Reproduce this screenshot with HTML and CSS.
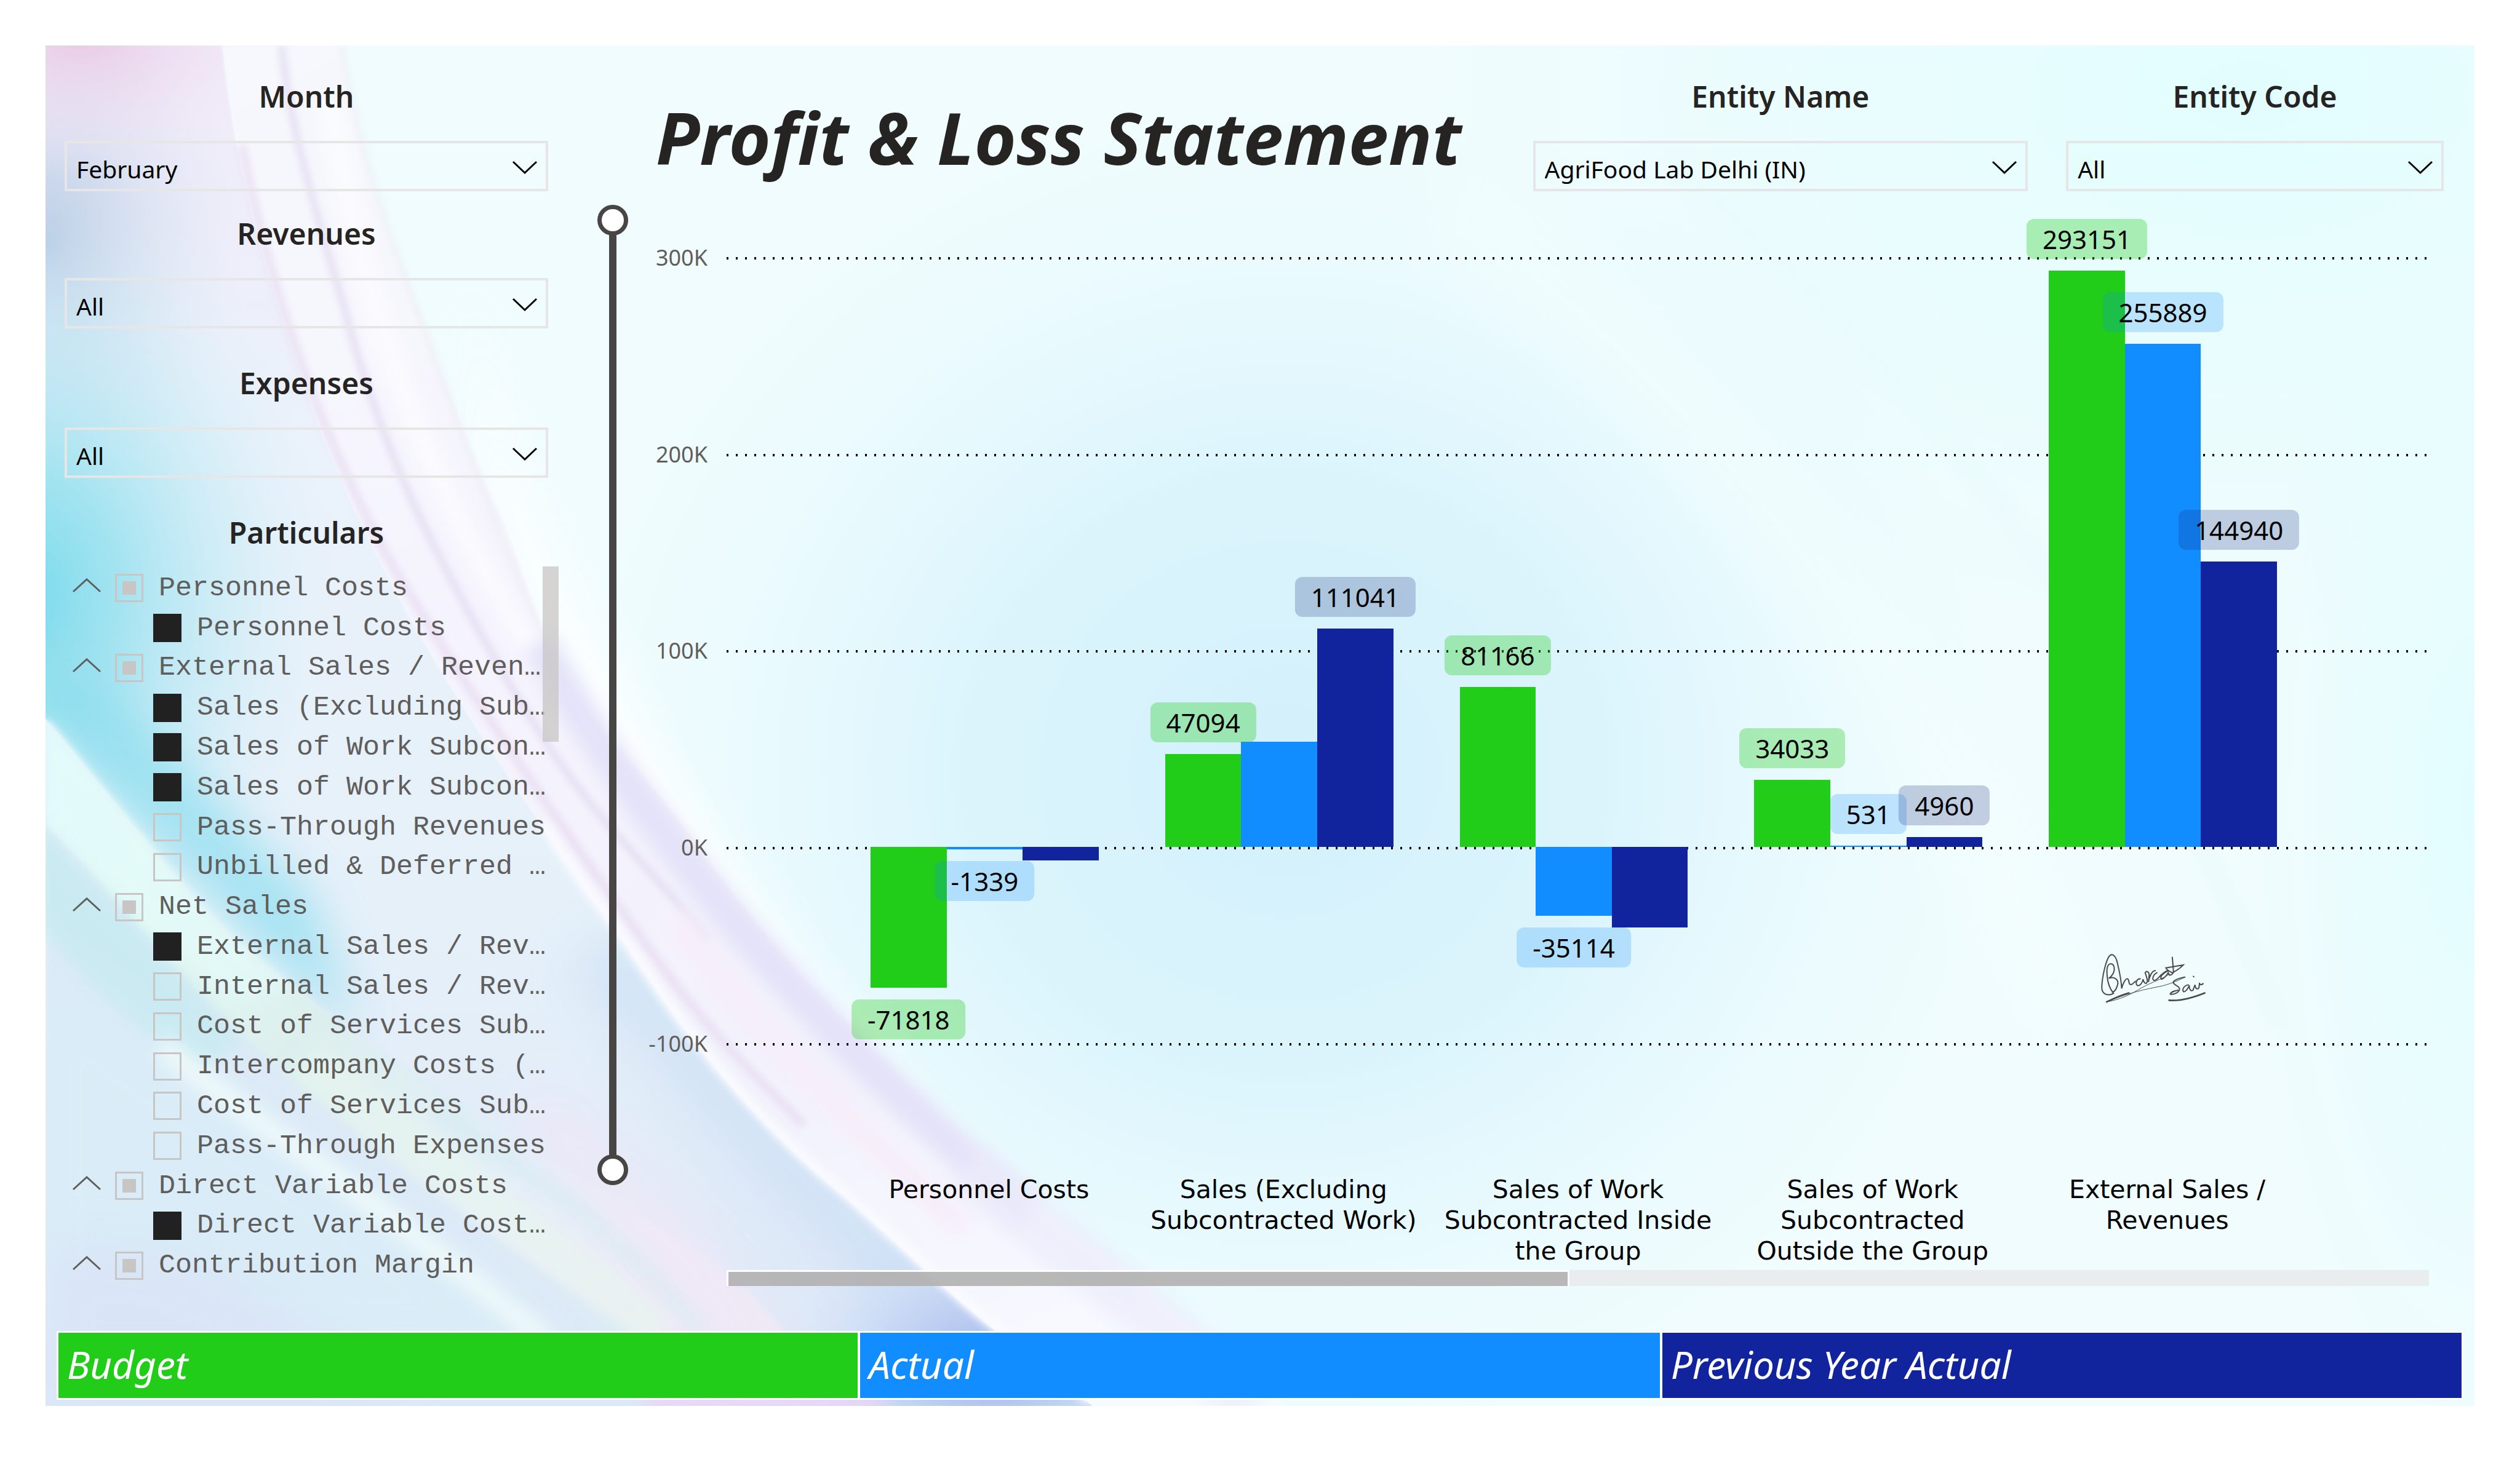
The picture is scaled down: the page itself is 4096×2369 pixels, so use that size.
FILE: index.html
```html
<!DOCTYPE html>
<html lang="en">
<head>
<meta charset="utf-8">
<title>Profit &amp; Loss Statement</title>
<link rel="stylesheet" href="styles.css">
</head>
<body>
<main class="report">
  <svg class="backdrop" viewBox="28 28 1512 847" preserveAspectRatio="none" aria-hidden="true">
    <defs>
      <filter id="b1" x="-20%" y="-20%" width="140%" height="140%"><feGaussianBlur stdDeviation="1"/></filter>
      <filter id="b2" x="-20%" y="-20%" width="140%" height="140%"><feGaussianBlur stdDeviation="2"/></filter>
      <filter id="b5" x="-20%" y="-20%" width="140%" height="140%"><feGaussianBlur stdDeviation="5"/></filter>
      <filter id="b14" x="-40%" y="-40%" width="180%" height="180%"><feGaussianBlur stdDeviation="14"/></filter>
      <radialGradient id="center"><stop offset="0" stop-color="#d2f0fb"/><stop offset=".45" stop-color="#d8f3fc" stop-opacity=".85"/><stop offset="1" stop-color="#e6fbfe" stop-opacity="0"/></radialGradient>
      <radialGradient id="corner"><stop offset="0" stop-color="#e2fdfe"/><stop offset="1" stop-color="#e6fefe" stop-opacity="0"/></radialGradient>
      <radialGradient id="cyan"><stop offset="0" stop-color="#78daec"/><stop offset=".3" stop-color="#93e0ee" stop-opacity=".8"/><stop offset=".65" stop-color="#c0eaf4" stop-opacity=".5"/><stop offset="1" stop-color="#e8f2fa" stop-opacity="0"/></radialGradient>
      <radialGradient id="slate"><stop offset="0" stop-color="#b4c8e2"/><stop offset="1" stop-color="#dfe8f6" stop-opacity="0"/></radialGradient>
      <radialGradient id="pink"><stop offset="0" stop-color="#e8c8e4"/><stop offset="1" stop-color="#f0e6f6" stop-opacity="0"/></radialGradient>
      <radialGradient id="blue"><stop offset="0" stop-color="#a3b4ea"/><stop offset=".5" stop-color="#bccff3" stop-opacity=".7"/><stop offset="1" stop-color="#d6e4f8" stop-opacity="0"/></radialGradient>
      <linearGradient id="inner" x1="0" y1="0" x2="0" y2="1"><stop offset="0" stop-color="#f1ebf8"/><stop offset=".3" stop-color="#eaf2fb"/><stop offset=".65" stop-color="#e5f0f9"/><stop offset="1" stop-color="#dce7f7"/></linearGradient>
      <linearGradient id="band" gradientUnits="userSpaceOnUse" x1="28" y1="450" x2="400" y2="800"><stop offset="0" stop-color="#e2fbfd"/><stop offset=".25" stop-color="#e4f9f2"/><stop offset=".5" stop-color="#dcefee"/><stop offset=".8" stop-color="#e6eff9"/><stop offset="1" stop-color="#f0eaf7"/></linearGradient>
      <linearGradient id="veil" gradientUnits="userSpaceOnUse" x1="190" y1="28" x2="640" y2="874"><stop offset="0" stop-color="#f6f8fd"/><stop offset=".4" stop-color="#f5f3fd"/><stop offset=".75" stop-color="#f2f2fc"/><stop offset="1" stop-color="#f8faff"/></linearGradient>
      <clipPath id="above"><path d="M28 28H1540V875H520C500 800 398 757 331 713C265 679 191 623 143 582C110 550 60 485 28 447Z"/></clipPath>
      <clipPath id="inside"><path d="M28 28H138C148 121 170 184 196 260C225 335 265 410 338 515C352 538 365 556 380 575C398 600 415 628 435 652C465 690 495 720 526 745C560 775 590 805 618 827L680 875H28Z"/></clipPath>
    </defs>
    <rect x="28" y="28" width="1512" height="847" fill="#f0fcfe"/>
    <ellipse cx="1400" cy="60" rx="520" ry="340" fill="url(#corner)"/>
    <ellipse cx="1540" cy="500" rx="140" ry="400" fill="url(#corner)"/>
    <ellipse cx="800" cy="480" rx="450" ry="420" fill="url(#center)"/>
    <path d="M900 130C1050 230 1200 420 1290 640" fill="none" stroke="#f5fefe" stroke-width="60" opacity=".4" filter="url(#b14)"/>
    <path d="M1040 100C1150 200 1300 330 1420 640" fill="none" stroke="#dcf6f5" stroke-width="5" opacity=".4" filter="url(#b5)"/>
    <path d="M290 160C310 330 430 530 640 770L560 740L380 500L300 300Z" fill="#fff" opacity=".9" filter="url(#b14)"/>
    <g clip-path="url(#inside)">
      <rect x="28" y="28" width="700" height="847" fill="url(#inner)"/>
      <g clip-path="url(#above)">
        <ellipse cx="28" cy="150" rx="125" ry="150" fill="url(#slate)"/>
        <ellipse cx="15" cy="370" rx="200" ry="260" fill="url(#cyan)"/>
        <path d="M10 420C90 520 140 575 220 640L195 560L60 420Z" fill="#84dcee" opacity=".65" filter="url(#b14)"/>
      </g>
      <ellipse cx="615" cy="850" rx="130" ry="100" fill="url(#blue)"/>
      <path d="M370 590C430 660 480 720 570 800" fill="none" stroke="#c6dcf4" stroke-width="40" opacity=".55" filter="url(#b14)"/>
    </g>
    <ellipse cx="50" cy="20" rx="130" ry="90" fill="url(#pink)"/>
    <path d="M138 28C148 121 170 184 196 260C225 335 265 410 338 515C352 538 365 556 380 575C398 600 415 628 435 652C465 690 495 720 526 745C560 775 590 805 618 827L680 875H800C770 850 720 805 700 790C665 765 635 740 618 723C585 695 550 660 526 635C500 610 490 598 480 586C460 562 440 535 426 515C400 482 375 455 352 427C335 390 325 355 313 325C292 282 265 208 233 121C225 90 216 60 212 28Z" fill="url(#veil)" filter="url(#b1)"/>
    <path d="M212 28C222 90 245 155 265 208C292 282 315 350 352 427" fill="none" stroke="#ecebf2" stroke-width="3" opacity=".6" filter="url(#b2)"/>
    <path d="M175 28C180 80 196 130 215 195C225 235 245 290 265 330C290 380 315 425 345 470C375 515 410 545 440 585" fill="none" stroke="#e3dcf1" stroke-width="5" opacity=".75" filter="url(#b2)"/>
    <path d="M205 60C225 200 270 310 340 420" fill="none" stroke="#fdfdff" stroke-width="12" opacity=".8" filter="url(#b5)"/>
    <path d="M150 90C170 190 200 270 240 345C290 430 360 530 412 602C440 640 465 665 500 700" fill="none" stroke="#e8dcf1" stroke-width="6" opacity=".7" filter="url(#b2)"/>
    <path d="M420 570C460 630 510 680 600 765" fill="none" stroke="#f7eef9" stroke-width="18" opacity=".9" filter="url(#b5)"/>
    <path d="M335 400C365 455 405 510 450 565C500 625 560 685 640 755" fill="none" stroke="#e1e0f8" stroke-width="22" opacity=".85" filter="url(#b5)"/>
    <path d="M600 725C660 775 720 820 780 875" fill="none" stroke="#ebecfb" stroke-width="34" opacity=".7" filter="url(#b5)"/>
    <path d="M338 513C352 536 365 554 380 573C398 598 415 626 435 650C465 688 495 718 526 743C560 773 590 803 618 825L678 872" fill="none" stroke="#fbfbff" stroke-width="7" opacity=".8" filter="url(#b2)"/>
    <path d="M28 447C60 485 110 550 143 582C191 623 265 679 331 713C398 757 450 790 490 850L480 875H28Z" fill="#dceaf7" filter="url(#b2)"/>
    <path d="M28 447C60 485 110 550 143 582C191 623 265 679 331 713C398 757 470 790 500 850L400 830C300 770 170 670 111 604C90 580 60 545 28 513Z" fill="url(#band)" filter="url(#b2)"/>
    <path d="M28 447C60 485 110 550 143 582C150 588 165 602 180 614L150 625C110 590 60 545 28 505Z" fill="#e2fafa" opacity=".75" filter="url(#b5)"/>
    <path d="M20 510C60 550 110 600 150 650L120 665C80 640 50 610 20 570Z" fill="#bcebee" opacity=".55" filter="url(#b5)"/>
    <path d="M20 600C70 630 130 680 190 720C240 755 300 800 340 840H20Z" fill="#d9eef8" opacity=".7" filter="url(#b14)"/>
    <path d="M100 650C150 695 240 750 340 835" fill="none" stroke="#f0fbfa" stroke-width="14" opacity=".85" filter="url(#b5)"/>
    <path d="M190 660C240 700 310 750 410 830" fill="none" stroke="#e6f5ee" stroke-width="26" opacity=".7" filter="url(#b5)"/>
    <path d="M270 690C330 730 380 760 440 830" fill="none" stroke="#d2ebf1" stroke-width="14" opacity=".6" filter="url(#b5)"/>
    <path d="M330 690C390 740 440 780 480 860" fill="none" stroke="#efe8f6" stroke-width="30" opacity=".9" filter="url(#b14)"/>
    <path d="M28 780C80 760 180 800 250 875H28Z" fill="#dae2f6" opacity=".7" filter="url(#b14)"/>
    <rect x="400" y="868" width="150" height="10" fill="#ecd2f6" filter="url(#b5)"/>
  </svg>

  <div class="body">
    <aside class="filters">
      <div class="field">
        <label for="month">Month</label>
        <div class="pick"><select id="month"><option>February</option></select><svg viewBox="0 0 40 20" aria-hidden="true"><path d="M1 1L20 19L39 1"/></svg></div>
      </div>
      <div class="field">
        <label for="revenues">Revenues</label>
        <div class="pick"><select id="revenues"><option>All</option></select><svg viewBox="0 0 40 20" aria-hidden="true"><path d="M1 1L20 19L39 1"/></svg></div>
      </div>
      <div class="field">
        <label for="expenses">Expenses</label>
        <div class="pick"><select id="expenses"><option>All</option></select><svg viewBox="0 0 40 20" aria-hidden="true"><path d="M1 1L20 19L39 1"/></svg></div>
      </div>
      <h2 class="tree-title">Particulars</h2>
      <div class="tree">
        <div class="row"><button class="fold" aria-label="Collapse"><svg viewBox="0 0 46 24"><path d="M1 22L23 2L45 22"/></svg></button><label><input type="checkbox" class="some">Personnel Costs</label></div>
        <div class="row child"><label><input type="checkbox" checked>Personnel Costs</label></div>
        <div class="row"><button class="fold" aria-label="Collapse"><svg viewBox="0 0 46 24"><path d="M1 22L23 2L45 22"/></svg></button><label><input type="checkbox" class="some">External Sales / Reven…</label></div>
        <div class="row child"><label><input type="checkbox" checked>Sales (Excluding Sub…</label></div>
        <div class="row child"><label><input type="checkbox" checked>Sales of Work Subcon…</label></div>
        <div class="row child"><label><input type="checkbox" checked>Sales of Work Subcon…</label></div>
        <div class="row child"><label><input type="checkbox">Pass-Through Revenues</label></div>
        <div class="row child"><label><input type="checkbox">Unbilled &amp; Deferred …</label></div>
        <div class="row"><button class="fold" aria-label="Collapse"><svg viewBox="0 0 46 24"><path d="M1 22L23 2L45 22"/></svg></button><label><input type="checkbox" class="some">Net Sales</label></div>
        <div class="row child"><label><input type="checkbox" checked>External Sales / Rev…</label></div>
        <div class="row child"><label><input type="checkbox">Internal Sales / Rev…</label></div>
        <div class="row child"><label><input type="checkbox">Cost of Services Sub…</label></div>
        <div class="row child"><label><input type="checkbox">Intercompany Costs (…</label></div>
        <div class="row child"><label><input type="checkbox">Cost of Services Sub…</label></div>
        <div class="row child"><label><input type="checkbox">Pass-Through Expenses</label></div>
        <div class="row"><button class="fold" aria-label="Collapse"><svg viewBox="0 0 46 24"><path d="M1 22L23 2L45 22"/></svg></button><label><input type="checkbox" class="some">Direct Variable Costs</label></div>
        <div class="row child"><label><input type="checkbox" checked>Direct Variable Cost…</label></div>
        <div class="row"><button class="fold" aria-label="Collapse"><svg viewBox="0 0 46 24"><path d="M1 22L23 2L45 22"/></svg></button><label><input type="checkbox" class="some">Contribution Margin</label></div>
        <span class="tree-scroll"></span>
      </div>
    </aside>

    <div class="zoom">
      <input type="range" min="0" max="100" value="0" aria-label="Axis maximum">
      <input type="range" min="0" max="100" value="100" aria-label="Axis minimum">
    </div>

    <section class="content">
      <header class="head">
        <h1>Profit &amp; Loss Statement</h1>
        <div class="field">
          <label for="entity">Entity Name</label>
          <div class="pick"><select id="entity"><option>AgriFood Lab Delhi (IN)</option></select><svg viewBox="0 0 40 20" aria-hidden="true"><path d="M1 1L20 19L39 1"/></svg></div>
        </div>
        <div class="field">
          <label for="code">Entity Code</label>
          <div class="pick"><select id="code"><option>All</option></select><svg viewBox="0 0 40 20" aria-hidden="true"><path d="M1 1L20 19L39 1"/></svg></div>
        </div>
      </header>

      <div class="chart">
        <div class="axis"><span>300K</span><span>200K</span><span>100K</span><span>0K</span><span>-100K</span></div>
        <div class="plot">
          <div class="lines"><i></i><i></i><i></i><i></i><i></i></div>
          <div class="groups">
            <div class="group">
              <div class="slot"><div class="bar neg budget" style="--v:71818"><b>-71818</b></div></div>
              <div class="slot"><div class="bar neg actual" style="--v:1339"><b>-1339</b></div></div>
              <div class="slot"><div class="bar neg prior" style="--v:7100"></div></div>
            </div>
            <div class="group">
              <div class="slot"><div class="bar budget" style="--v:47094"><b>47094</b></div></div>
              <div class="slot"><div class="bar actual" style="--v:53400"></div></div>
              <div class="slot"><div class="bar prior" style="--v:111041"><b>111041</b></div></div>
            </div>
            <div class="group">
              <div class="slot"><div class="bar budget" style="--v:81166"><b>81166</b></div></div>
              <div class="slot"><div class="bar neg actual" style="--v:35114"><b>-35114</b></div></div>
              <div class="slot"><div class="bar neg prior" style="--v:41300"></div></div>
            </div>
            <div class="group">
              <div class="slot"><div class="bar budget" style="--v:34033"><b>34033</b></div></div>
              <div class="slot"><div class="bar actual" style="--v:531"><b>531</b></div></div>
              <div class="slot"><div class="bar prior" style="--v:4960"><b>4960</b></div></div>
            </div>
            <div class="group">
              <div class="slot"><div class="bar budget" style="--v:293151"><b>293151</b></div></div>
              <div class="slot"><div class="bar actual" style="--v:255889"><b>255889</b></div></div>
              <div class="slot"><div class="bar prior" style="--v:144940"><b>144940</b></div></div>
            </div>
          </div>
          <svg class="signature" viewBox="0 0 780 420" role="img" aria-label="Signature">
            <path d="M174 292C150 306 116 300 116 262C118 210 134 140 150 112C164 92 184 98 194 146C204 190 212 220 214 268C218 250 232 216 244 220C254 228 246 252 262 248C270 246 274 238 282 232"/>
            <path d="M142 200C140 176 142 150 158 146C182 146 182 180 168 200C160 212 150 218 150 218C180 206 204 226 192 256C186 276 176 284 168 286M142 200C144 240 156 270 174 292"/>
            <path d="M306 220C290 218 280 240 290 252C304 260 318 236 320 222C322 240 332 246 338 240C346 230 332 196 330 190C336 178 348 184 350 200L346 236C350 212 364 178 380 180"/>
            <path d="M388 190C366 200 362 230 376 228C392 226 400 206 412 198C428 186 434 178 440 182C420 190 400 210 410 222C424 222 436 200 444 190C446 206 458 206 470 188M464 114L470 188M432 166L518 152C500 170 480 182 464 190C450 184 436 176 432 166Z"/>
            <path d="M526 212C500 216 470 226 468 238C474 254 502 256 500 272C496 290 468 298 454 296C456 284 474 280 492 276"/>
            <path d="M544 250C526 250 508 272 520 284C532 284 544 262 548 252C546 272 556 284 566 276L576 250C578 270 590 276 596 262L598 240C600 250 606 252 616 244M568 208L570 210"/>
            <path class="fine" d="M140 334C220 300 300 278 380 262C430 254 480 236 526 212M140 334C210 322 260 296 310 266C370 232 420 220 450 196"/>
            <path class="thick" d="M140 334C170 320 210 300 250 290M448 326C500 330 560 316 624 290"/>
          </svg>
        </div>
        <div class="names">
          <span>Personnel Costs</span>
          <span>Sales (Excluding<br>Subcontracted Work)</span>
          <span>Sales of Work<br>Subcontracted Inside<br>the Group</span>
          <span>Sales of Work<br>Subcontracted<br>Outside the Group</span>
          <span>External Sales /<br>Revenues</span>
        </div>
        <div class="scroll"><span></span></div>
      </div>
    </section>
  </div>

  <footer class="legend">
    <div class="budget">Budget</div>
    <div class="actual">Actual</div>
    <div class="prior">Previous Year Actual</div>
  </footer>
</main>
</body>
</html>
```
FILE: styles.css
```css
* { box-sizing: border-box; }

body {
  margin: 0;
  padding: 74px 74px 83px;
  background: #fff;
  color: #252423;
  font-family: "Noto Sans", "Open Sans", sans-serif;
}

.report {
  position: relative;
  overflow: hidden;
  display: flex;
  flex-direction: column;
}

.backdrop {
  position: absolute;
  inset: 0;
  width: 100%;
  height: 100%;
}

.body {
  position: relative;
  display: grid;
  grid-template-columns: minmax(0, 786fr) auto minmax(0, 2951fr);
  padding: 53px 50px 0 31px;
}

.budget { background: #21cd19; --tint: rgba(33, 205, 25, .32); }
.actual { background: #118dff; --tint: rgba(17, 141, 255, .22); }
.prior { background: #12239e; --tint: rgba(18, 35, 118, .22); }

/* Filters */

.field > label,
.tree-title {
  display: block;
  margin: 0;
  font-size: 48px;
  font-weight: 600;
  line-height: 60px;
  text-align: center;
}

.filters .field { margin-bottom: 39px; }
.filters .field + .field { margin-bottom: 59px; }

.pick {
  position: relative;
  margin-top: 42px;
}

.pick select {
  display: block;
  width: 100%;
  height: 82px;
  padding: 8px 80px 0 15px;
  border: 4px solid #e6e6e6;
  border-radius: 0;
  background: transparent;
  appearance: none;
  color: #000;
  font: 39px "Noto Sans", "Open Sans", sans-serif;
}

.pick svg {
  position: absolute;
  right: 18px;
  top: 33px;
  width: 40px;
  height: 20px;
  overflow: visible;
  fill: none;
  stroke: #000;
  stroke-width: 3;
  pointer-events: none;
}

.tree {
  position: relative;
  display: grid;
  grid-auto-rows: 1fr;
  height: 1166px;
  margin-top: 28px;
  color: #605e5c;
  font: 45px "Liberation Mono", "Courier New", monospace;
}

.row {
  display: flex;
  align-items: center;
  padding-left: 13px;
  white-space: pre;
}

.row.child { padding-left: 144px; }

.row label {
  display: flex;
  align-items: center;
  gap: 25px;
}

.fold {
  width: 46px;
  height: 24px;
  margin: 0 23px 8px 0;
  padding: 0;
  border: 0;
  background: none;
}

.fold svg {
  display: block;
  fill: none;
  stroke: #605e5c;
  stroke-width: 3;
}

.row input {
  flex: none;
  width: 46px;
  height: 46px;
  margin: 0;
  border: 3px solid #c8c6c4;
  appearance: none;
}

.row input:checked {
  border-color: #212121;
  background: #212121;
}

.row input.some {
  background: #c8c6c4 content-box;
  padding: 9px;
}

.tree-scroll {
  position: absolute;
  right: -17px;
  top: -3px;
  width: 26px;
  height: 285px;
  background: rgba(200, 198, 196, .75);
}

/* Axis range slider */

.zoom {
  position: relative;
  width: 50px;
  height: 1594px;
  margin: 206px 0 0 80px;
}

.zoom::before {
  content: "";
  position: absolute;
  inset: 25px 19px;
  background: #484644;
}

.zoom input {
  position: absolute;
  inset: 0;
  width: 50px;
  height: 100%;
  margin: 0;
  background: none;
  appearance: none;
  writing-mode: vertical-lr;
  pointer-events: none;
}

.zoom input::-webkit-slider-thumb {
  width: 50px;
  height: 50px;
  border: 7px solid #484644;
  border-radius: 50%;
  background: #fff;
  appearance: none;
  pointer-events: auto;
}

/* Header */

.head {
  display: grid;
  grid-template-columns: minmax(0, 1409fr) minmax(0, 805fr) minmax(0, 614fr);
  column-gap: 62px;
}

h1 {
  margin: 14px 0 0 45px;
  font-size: 117px;
  font-style: italic;
  font-weight: 700;
  line-height: 164px;
  white-space: nowrap;
}

/* Chart */

.chart {
  display: grid;
  grid-template-columns: 129px minmax(0, 1fr);
  column-gap: 31px;
  padding: 107px 24px 0 0;
}

.axis,
.lines {
  display: flex;
  flex-direction: column;
  justify-content: space-between;
}

.axis {
  height: 1322px;
  margin: -21px 0;
  color: #605e5c;
  font-size: 36px;
  line-height: 44px;
  text-align: right;
}

.plot {
  position: relative;
  height: 1278px;
}

.lines {
  position: absolute;
  inset: 0 0 -4px;
}

.lines i {
  height: 4px;
  background: radial-gradient(circle, #000 2px, transparent 2px) -6px 0 / 15px 4px;
}

.groups,
.names {
  display: grid;
  grid-template-columns: repeat(5, minmax(0, 1fr));
  padding: 0 186px 0 187px;
}

.groups {
  position: relative;
  height: 100%;
}

.group {
  display: flex;
  padding: 0 61px 0 47px;
}

.slot {
  position: relative;
  flex: 1;
}

.bar {
  position: absolute;
  bottom: 25%;
  width: 100%;
  height: calc(var(--v) / 4000 * 1%);
}

.bar.neg {
  top: 75%;
  bottom: auto;
}

.bar b {
  position: absolute;
  z-index: 1;
  left: 50%;
  bottom: calc(100% + 19px);
  transform: translateX(-50%);
  padding: 0 26px;
  border-radius: 12px;
  background: var(--tint);
  color: #000;
  font: 42px/65px "Noto Sans", "Open Sans", sans-serif;
}

.bar.neg b {
  top: calc(100% + 19px);
  bottom: auto;
}

.signature {
  position: absolute;
  left: 79%;
  top: 86%;
  width: 257px;
  margin: 2px 0 0 11px;
  fill: none;
  stroke: #4a4a4a;
  stroke-width: 6;
  stroke-linecap: round;
}

.signature .fine { stroke-width: 3; }
.signature .thick { stroke-width: 8; }

.names {
  grid-column: 2;
  min-height: 150px;
  margin-top: 211px;
  color: #000;
  font: 41px/50px "DejaVu Sans", Verdana, sans-serif;
  text-align: center;
  white-space: nowrap;
}

.scroll {
  grid-column: 2;
  height: 26px;
  margin-top: 6px;
  background: rgba(230, 226, 226, .6);
}

.scroll span {
  display: block;
  width: 49.5%;
  height: 26px;
  border: solid #fff;
  border-width: 3px 3px 0;
  background: rgba(165, 163, 163, .72) padding-box;
}

/* Legend */

.legend {
  position: relative;
  display: grid;
  grid-template-columns: repeat(3, minmax(0, 1fr));
  gap: 4px;
  margin: 73px 18px 10px;
  padding: 3px;
  background: #fff;
  color: #fff;
  font-size: 62px;
  font-style: italic;
  line-height: 102px;
}

.legend div { padding: 0 14px 4px; }
```
